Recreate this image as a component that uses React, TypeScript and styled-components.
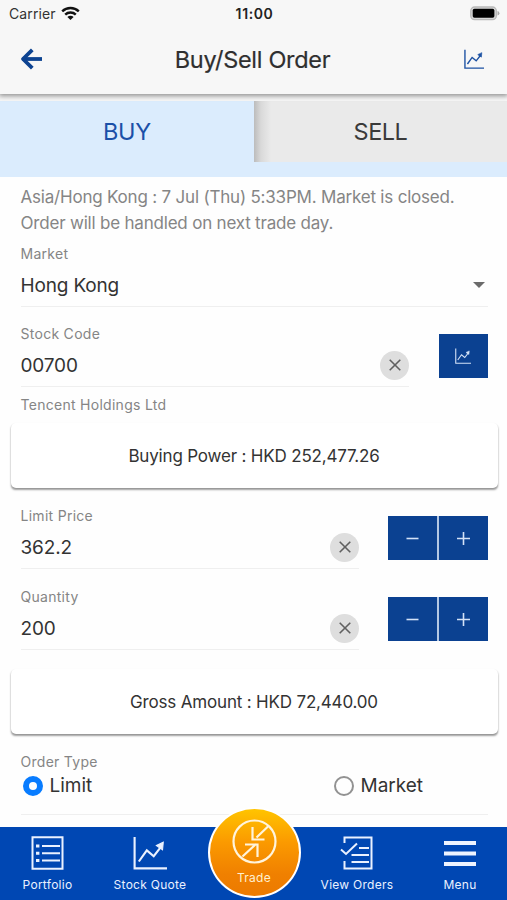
import React from 'react';
import styled, { createGlobalStyle } from 'styled-components';

const GlobalStyle = createGlobalStyle`
  * { box-sizing: border-box; }
  body {
    margin: 0;
    background: #fff;
    font-family: Inter, 'Liberation Sans', sans-serif;
    color: #333;
  }
  button { font: inherit; border: 0; padding: 0; margin: 0; cursor: pointer; }
`;

const Screen = styled.main`
  width: 507px;
  height: 900px;
  overflow: hidden;
  display: flex;
  flex-direction: column;
  background: #fefefe;
`;

const Header = styled.header`
  flex: none;
  height: 94px;
  background: #f7f7f7;
  box-shadow: 0 1px 5px 1px rgba(0, 0, 0, 0.42);
  z-index: 1;
`;

const StatusBar = styled.div`
  display: grid;
  grid-template-columns: 1fr auto 1fr;
  align-items: center;
  height: 27px;
  padding: 0 7px 0 9px;
`;

const Carrier = styled.span`
  display: flex;
  align-items: center;
  gap: 5px;
  font-size: 14px;
  letter-spacing: 0.12px;
  color: #333;
`;

const Clock = styled.span`
  font-size: 14px;
  font-weight: 600;
  letter-spacing: 0.6px;
  color: #222;
`;

const BatterySlot = styled.span`
  display: flex;
  justify-content: flex-end;
`;

const TitleBar = styled.div`
  display: grid;
  grid-template-columns: 60px 1fr 62px;
  align-items: center;
  height: 64px;
`;

const Title = styled.h1`
  margin: 0;
  text-align: center;
  font-size: 23.5px;
  font-weight: 400;
  letter-spacing: -0.3px;
  color: #2f2f2f;
  -webkit-text-stroke: 0.2px #2f2f2f;
`;

const IconButton = styled.button<{ $end?: boolean }>`
  display: flex;
  justify-content: ${(p) => (p.$end ? 'flex-end' : 'flex-start')};
  padding: ${(p) => (p.$end ? '0 23px 0 0' : '0 0 0 20px')};
  background: none;
`;

const Tabs = styled.div`
  flex: none;
  display: grid;
  grid-template-columns: 254px 253px;
  height: 83px;
  padding: 7px 0 16px;
  background: linear-gradient(#f7f7f7 7px, #dbecfd 7px);
`;

const Tab = styled.button<{ $active?: boolean }>`
  height: 61px;
  font-size: 23.5px;
  letter-spacing: ${(p) => (p.$active ? '-0.3px' : '-0.5px')};
  color: ${(p) => (p.$active ? '#1b50a8' : '#3a3a3a')};
  background: ${(p) =>
    p.$active ? 'transparent' : 'linear-gradient(90deg, #bcbcbc, #d9d9d9 7px, #eaeaea 17px)'};
`;

const Form = styled.section`
  flex: 1;
  min-height: 0;
  display: flex;
  flex-direction: column;
  padding: 7px 19.5px 0 20.5px;
`;

const Notice = styled.p`
  margin: 0 0 8px;
  font-size: 17px;
  line-height: 26px;
  letter-spacing: -0.2px;
  color: #858585;
  white-space: nowrap;
`;

const FieldRow = styled.div<{ $gap?: number }>`
  flex: none;
  display: flex;
  justify-content: space-between;
  height: 63px;
  margin-bottom: ${(p) => p.$gap ?? 17}px;
`;

const Field = styled.div<{ $width?: number }>`
  width: ${(p) => (p.$width ? `${p.$width}px` : '100%')};
  border-bottom: 1px solid #efefef;
`;

const Label = styled.div`
  height: 20px;
  line-height: 20px;
  font-size: 14px;
  letter-spacing: 0.28px;
  color: #858585;
`;

const Value = styled.div`
  display: flex;
  align-items: center;
  justify-content: space-between;
  height: 42px;
  font-size: 19px;
  letter-spacing: -0.16px;
  color: #333;
`;

const Caret = styled.span`
  margin-right: 3px;
  border: 6px solid transparent;
  border-top-color: #6b6b6b;
  border-bottom: 0;
`;

const ClearButton = styled.button`
  display: flex;
  align-items: center;
  justify-content: center;
  width: 29px;
  height: 29px;
  border-radius: 50%;
  background: #dedede;
`;

const Actions = styled.div`
  display: flex;
  gap: 2px;
  height: 44px;
  margin-top: 10px;
  background: #b4c8e4;
`;

const BlueButton = styled.button<{ $nudge?: boolean }>`
  display: flex;
  align-items: center;
  justify-content: center;
  width: 49px;
  height: 44px;
  padding-left: ${(p) => (p.$nudge ? '1.5px' : '0')};
  background: #0b4191;
`;

const Company = styled(Label)`
  flex: none;
  margin-bottom: 8px;
`;

const Card = styled.div`
  flex: none;
  display: flex;
  align-items: center;
  justify-content: center;
  height: 65px;
  margin: 0 -10px 18px -10px;
  border-radius: 5px;
  background: #fff;
  box-shadow: 0 2px 2px -0.5px rgba(0, 0, 0, 0.35), 0 1px 2px rgba(0, 0, 0, 0.13);
  font-size: 17px;
  letter-spacing: -0.18px;
  color: #333;
`;

const OrderTypes = styled.div`
  flex: none;
  height: 63px;
  border-bottom: 1px solid #efefef;
`;

const Options = styled.div`
  display: grid;
  grid-template-columns: 311px 1fr;
  height: 27px;
  padding-left: 2px;
`;

const Option = styled.div`
  display: flex;
  align-items: center;
  gap: 7px;
  font-size: 19px;
`;

const Radio = styled.span<{ $on?: boolean }>`
  width: 20px;
  height: 20px;
  border-radius: 50%;
  border: ${(p) => (p.$on ? '6px solid #087cff' : '2px solid #929292')};
`;

const Nav = styled.nav`
  flex: none;
  display: grid;
  grid-template-columns: 95px 110px 98px 108px 98px;
  height: 73px;
  background: #0047b3;
`;

const NavItem = styled.button`
  display: flex;
  flex-direction: column;
  align-items: center;
  padding-top: 9px;
  gap: 5px;
  background: none;
  color: #eaf1ff;
  font-size: 12px;
  line-height: 20px;
  letter-spacing: 0.27px;
  white-space: nowrap;
`;

const TradeButton = styled(NavItem)`
  justify-self: center;
  width: 93px;
  height: 91px;
  margin-top: -20px;
  padding-top: 10px;
  gap: 4px;
  border: 2.5px solid #fff;
  border-radius: 50%;
  background: linear-gradient(#ffc400, #fb9a00 38%, #f08000 75%, #ec7a00);
  z-index: 1;
  color: #fff0cf;
`;

const ChartIcon = ({ size, color, stroke = 2 }: { size: number; color: string; stroke?: number }) => (
  <svg width={size} height={size} viewBox="0 0 32 32" fill="none" stroke={color} strokeWidth={stroke}>
    <path d="M1.5 1v29.5H32" />
    <path d="M5.5 24l7.5-10.5 6.5 5.5 7-9" />
    <path d="M22 9l6.5-3.2L27.8 13z" fill={color} strokeWidth="1" />
  </svg>
);

const WifiIcon = () => (
  <svg width="19" height="15" viewBox="0 0 19 15" fill="none" stroke="#111" strokeWidth="2.4">
    <path d="M1.2 5.4a12 12 0 0 1 16.6 0" />
    <path d="M4.2 8.7a7.6 7.6 0 0 1 10.6 0" />
    <path d="M9.5 14L6.4 11a4.4 4.4 0 0 1 6.2 0z" fill="#111" stroke="none" />
  </svg>
);

const BatteryIcon = () => (
  <svg width="30" height="15" viewBox="0 0 31 15">
    <rect x="0.8" y="0.8" width="26.4" height="13" rx="4" fill="#d8d8d8" stroke="#b9b9b9" strokeWidth="1.4" />
    <rect x="2.8" y="2.7" width="22.4" height="9.2" rx="1.8" fill="#000" />
    <path d="M28.4 5q2 .6 2 2.3t-2 2.3z" fill="#aaa" />
  </svg>
);

const BackIcon = () => (
  <svg width="23" height="22" viewBox="0 0 23 22" fill="none" stroke="#0d4391" strokeWidth="3.8">
    <path d="M2.5 11h19.5" />
    <path d="M12.3 1.8L3 11l9.3 9.2" strokeLinejoin="round" />
  </svg>
);

const CrossIcon = () => (
  <svg width="12" height="12" viewBox="0 0 12 12" stroke="#606060" strokeWidth="1.6">
    <path d="M.7.7l10.6 10.6M11.3.7L.7 11.3" />
  </svg>
);

const StepIcon = ({ plus }: { plus?: boolean }) => (
  <svg width="13" height="13" viewBox="0 0 13 13" stroke="#d4e2f7" strokeWidth="1.6">
    <path d={plus ? 'M0 6.5h13M6.5 0v13' : 'M.5 6.5h12'} />
  </svg>
);

const PortfolioIcon = () => (
  <svg width="33" height="34" viewBox="0 0 33 34" fill="none" stroke="#eaf1ff" strokeWidth="2">
    <path d="M1.5 1.2h30v31.6h-30z" />
    <path d="M11 10h18M11 17.2h18M11 24.5h18" />
    <path d="M5 10h3.4M5 17.2h3.4M5 24.5h3.4" strokeWidth="3" />
  </svg>
);

const OrdersIcon = () => (
  <svg width="34" height="34" viewBox="0 0 34 34" fill="none" stroke="#eaf1ff" strokeWidth="2">
    <path d="M4.5 7V1.5h27v31h-27V25" />
    <path d="M1 13.5l5 4.5L17 7.5" />
    <path d="M19 12h10M11.5 19H29M11.5 26H29" />
  </svg>
);

const MenuIcon = () => (
  <svg width="32" height="34" viewBox="0 0 32 34" stroke="#eef4ff" strokeWidth="4.2">
    <path d="M0 7h32M0 17.5h32M0 28h32" />
  </svg>
);

const TradeIcon = () => (
  <svg width="45" height="45" viewBox="0 0 45 45" fill="none" stroke="#fff4dc" strokeWidth="2.2">
    <circle cx="22.5" cy="22.5" r="21" />
    <path d="M36.5 7L24.5 18.5M20.5 8v12.5h12" />
    <path d="M10.5 37.5L24 25M13 25.5h12.5V38" />
  </svg>
);

function NumberField({ label, value }: { label: string; value: string }) {
  return (
    <>
      <Field $width={338.5}>
        <Label>{label}</Label>
        <Value>
          {value}
          <ClearButton aria-label={`Clear ${label}`}><CrossIcon /></ClearButton>
        </Value>
      </Field>
      <Actions>
        <BlueButton aria-label={`Decrease ${label}`}><StepIcon /></BlueButton>
        <BlueButton $nudge aria-label={`Increase ${label}`}><StepIcon plus /></BlueButton>
      </Actions>
    </>
  );
}

export default function App() {
  return (
    <>
      <GlobalStyle />
      <Screen>
        <Header>
          <StatusBar>
            <Carrier>Carrier <WifiIcon /></Carrier>
            <Clock>11:00</Clock>
            <BatterySlot><BatteryIcon /></BatterySlot>
          </StatusBar>
          <TitleBar>
            <IconButton aria-label="Back"><BackIcon /></IconButton>
            <Title>Buy/Sell Order</Title>
            <IconButton $end aria-label="Chart"><ChartIcon size={20} color="#1c51a3" stroke={2.2} /></IconButton>
          </TitleBar>
        </Header>
        <Tabs>
          <Tab $active>BUY</Tab>
          <Tab>SELL</Tab>
        </Tabs>
        <Form>
          <Notice>
            Asia/Hong Kong : 7 Jul (Thu) 5:33PM. Market is closed.<br />
            Order will be handled on next trade day.
          </Notice>
          <FieldRow>
            <Field>
              <Label>Market</Label>
              <Value>Hong Kong <Caret /></Value>
            </Field>
          </FieldRow>
          <FieldRow $gap={8}>
            <Field $width={388.5}>
              <Label>Stock Code</Label>
              <Value>
                00700
                <ClearButton aria-label="Clear Stock Code"><CrossIcon /></ClearButton>
              </Value>
            </Field>
            <Actions>
              <BlueButton aria-label="Show chart"><ChartIcon size={16} color="#d4e2f7" stroke={2.2} /></BlueButton>
            </Actions>
          </FieldRow>
          <Company>Tencent Holdings Ltd</Company>
          <Card>Buying Power : HKD 252,477.26</Card>
          <FieldRow $gap={18}>
            <NumberField label="Limit Price" value="362.2" />
          </FieldRow>
          <FieldRow $gap={19}>
            <NumberField label="Quantity" value="200" />
          </FieldRow>
          <Card>Gross Amount : HKD 72,440.00</Card>
          <OrderTypes>
            <Label>Order Type</Label>
            <Options>
              <Option><Radio $on />Limit</Option>
              <Option><Radio />Market</Option>
            </Options>
          </OrderTypes>
        </Form>
        <Nav>
          <NavItem><PortfolioIcon />Portfolio</NavItem>
          <NavItem><ChartIcon size={34} color="#eaf1ff" />Stock Quote</NavItem>
          <TradeButton><TradeIcon />Trade</TradeButton>
          <NavItem><OrdersIcon />View Orders</NavItem>
          <NavItem><MenuIcon />Menu</NavItem>
        </Nav>
      </Screen>
    </>
  );
}
